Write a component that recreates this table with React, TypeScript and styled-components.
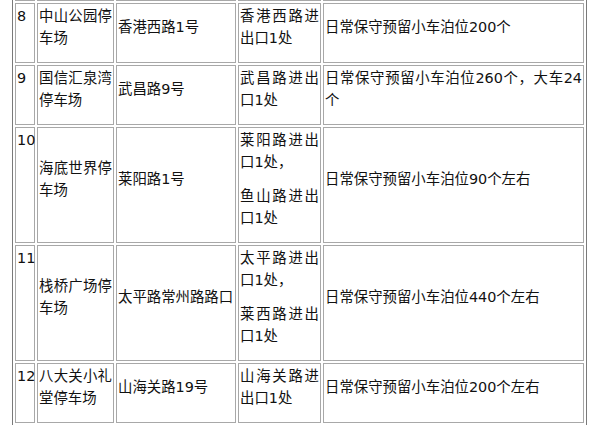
import React from 'react';
import styled, { createGlobalStyle } from 'styled-components';

const GlobalStyle = createGlobalStyle`
  html, body { margin: 0; padding: 0; background: #fff; }
  body {
    font-family: "DejaVu Sans", "Noto Sans CJK SC", sans-serif;
    font-size: 14.4px;
    color: #111;
  }
`;

// the screenshot is a crop out of a longer table: rows above and below are cut off
const Viewport = styled.div`height: 425px; overflow: hidden; padding-left: 12px;`;
const Table = styled.table`
  box-sizing: border-box;
  width: 575px;
  margin-top: -22px;
  table-layout: fixed;
  border: 1px solid #7a7a7a;
  border-spacing: 2px;
`;
const Cell = styled.td<{ $w: number; $top?: boolean }>`
  box-sizing: border-box;
  width: ${p => p.$w}px;
  padding: 1px;
  border: 1px solid #a8a8a8;
  line-height: 22px;
  text-align: justify;
  vertical-align: ${p => (p.$top ? 'top' : 'middle')};
`;
const Filler = styled(Cell)`height: 20px;`;
const Para = styled.p`margin: 0 0 12px 0;`;

const WIDTHS = [20, 77, 120, 83, 261];

type Lot = { no: string; name: string; addr: string; exits: string[]; note: string };

const LOTS: Lot[] = [
  { no: '8', name: '中山公园停车场', addr: '香港西路1号', exits: ['香港西路进出口1处'], note: '日常保守预留小车泊位200个' },
  { no: '9', name: '国信汇泉湾停车场', addr: '武昌路9号', exits: ['武昌路进出口1处'], note: '日常保守预留小车泊位260个，大车24个' },
  { no: '10', name: '海底世界停车场', addr: '莱阳路1号', exits: ['莱阳路进出口1处，', '鱼山路进出口1处'], note: '日常保守预留小车泊位90个左右' },
  { no: '11', name: '栈桥广场停车场', addr: '太平路常州路路口', exits: ['太平路进出口1处，', '莱西路进出口1处'], note: '日常保守预留小车泊位440个左右' },
  { no: '12', name: '八大关小礼堂停车场', addr: '山海关路19号', exits: ['山海关路进出口1处'], note: '日常保守预留小车泊位200个左右' },
];

const CutRow: React.FC = () => (
  <tr>
    {WIDTHS.map((w, i) => <Filler key={i} $w={w} />)}
  </tr>
);

const App: React.FC = () => (
  <>
    <GlobalStyle />
    <Viewport>
      <Table>
        <tbody>
          <CutRow />
          {LOTS.map(lot => (
            <tr key={lot.no}>
              <Cell $w={WIDTHS[0]} $top><Para>{lot.no}</Para></Cell>
              <Cell $w={WIDTHS[1]}><Para>{lot.name}</Para></Cell>
              <Cell $w={WIDTHS[2]}><Para>{lot.addr}</Para></Cell>
              <Cell $w={WIDTHS[3]}>
                {lot.exits.map(e => <Para key={e}>{e}</Para>)}
              </Cell>
              <Cell $w={WIDTHS[4]}><Para>{lot.note}</Para></Cell>
            </tr>
          ))}
          <CutRow />
        </tbody>
      </Table>
    </Viewport>
  </>
);

export default App;
